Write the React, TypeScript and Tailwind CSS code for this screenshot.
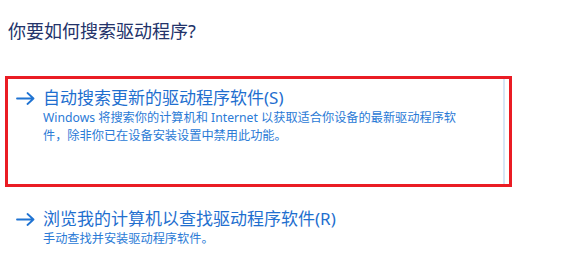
import type { ReactNode } from "react";

const font = { fontFamily: '"Noto Sans", "Noto Sans CJK SC", sans-serif' };

function Arrow() {
  return (
    <svg width="19" height="13" viewBox="0 0 19 13" fill="none" className="shrink-0">
      <path
        d="M1 6.5H17.5M11.5 1L17.5 6.5L11.5 12"
        stroke="#1f73d2"
        strokeWidth="1.8"
        strokeLinecap="round"
        strokeLinejoin="round"
      />
    </svg>
  );
}

function Option({ title, children }: { title: string; children: ReactNode }) {
  return (
    <div className="flex gap-2 pl-2">
      <div className="flex h-[22px] items-center">
        <Arrow />
      </div>
      <div>
        <p className="text-[17px] leading-[22px] text-[#1f6fcf]">{title}</p>
        <p className="text-[12.2px] leading-[18px] text-[#2a7ad6]">{children}</p>
      </div>
    </div>
  );
}

export default function App() {
  return (
    <div className="h-[268px] w-[567px] overflow-hidden bg-white" style={font}>
      <h1 className="ml-2 mt-[19px] text-[18px] leading-[24px] text-[#23336a]">
        你要如何搜索驱动程序?
      </h1>

      {/* highlighted option */}
      <div className="ml-[5px] mt-[33px] flex h-[111px] w-[507px] border-[3px] border-[#ea1c24] pr-1">
        <div className="flex-1 border-r-2 border-[#d6e7f7] pt-2">
          <Option title="自动搜索更新的驱动程序软件(S)">
            Windows 将搜索你的计算机和 Internet 以获取适合你设备的最新驱动程序软
            <br />
            件，除非你已在设备安装设置中禁用此功能。
          </Option>
        </div>
      </div>

      <div className="ml-[8px] mt-[21px]">
        <Option title="浏览我的计算机以查找驱动程序软件(R)">手动查找并安装驱动程序软件。</Option>
      </div>
    </div>
  );
}
